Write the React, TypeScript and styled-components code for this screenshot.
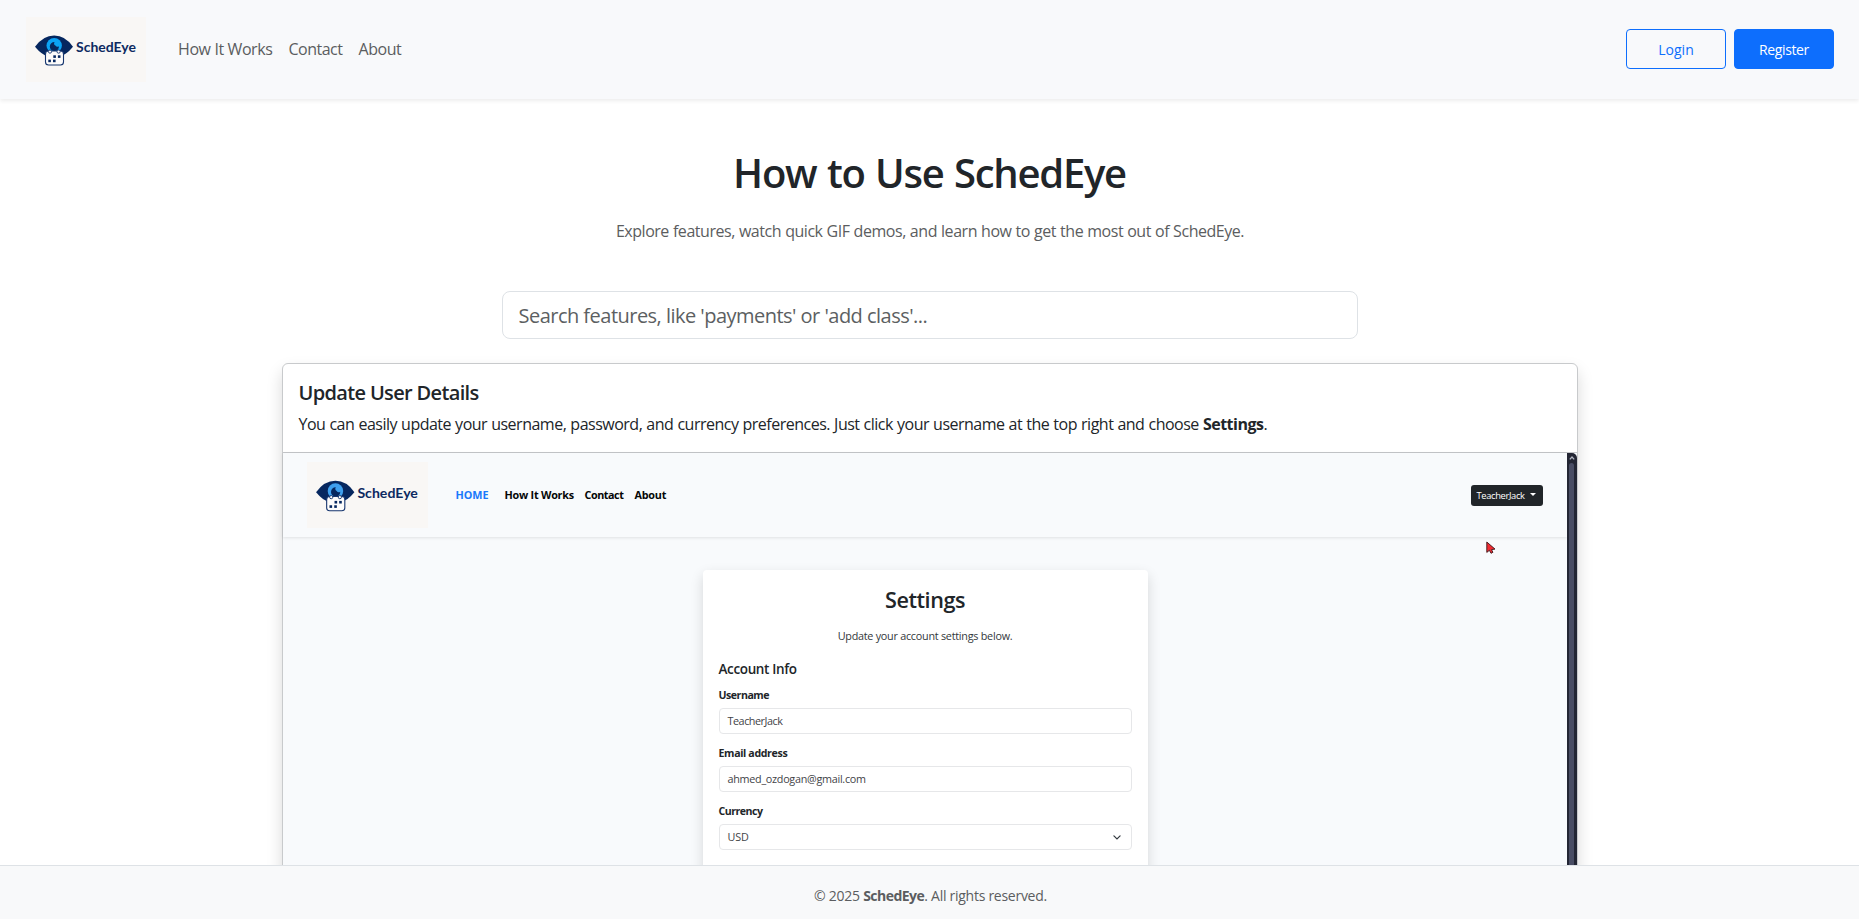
import React from 'react';
import styled, { createGlobalStyle, css } from 'styled-components';

const GlobalStyle = createGlobalStyle`
  *, *::before, *::after { box-sizing: border-box; }
  body {
    margin: 0;
    background: #fff;
    color: #212529;
    font-family: "Open Sans", "Noto Sans", sans-serif;
    font-size: 16px;
    line-height: 24px;
  }
`;

const Page = styled.div`
  display: flex;
  flex-direction: column;
  height: 100vh;
  overflow: hidden;
`;

const Header = styled.header`
  position: relative;
  z-index: 1;
  flex: none;
  display: flex;
  align-items: center;
  height: 99px;
  padding: 0 25px 1px 26px;
  background: #f8f9fb;
  box-shadow: 0 2px 4px rgba(0, 0, 0, 0.075);
`;

const LogoImage = styled.svg<{ $width: number; $height: number }>`
  flex: none;
  display: block;
  width: ${(p) => p.$width}px;
  height: ${(p) => p.$height}px;
`;

const Nav = styled.nav`
  display: flex;
  gap: 16px;
  margin-left: 32px;
  flex: 1;
`;

const NavLink = styled.a<{ $tracking: number }>`
  color: #5b5d60;
  letter-spacing: ${(p) => p.$tracking}px;
`;

const Actions = styled.div`
  display: flex;
  gap: 8px;
`;

const Button = styled.button<{ $primary?: boolean }>`
  width: 100px;
  height: 40px;
  padding: 1px 0 0;
  border: 1px solid #0d6efd;
  border-radius: 4px;
  font: 400 14px/21px "Open Sans", sans-serif;
  ${(p) =>
    p.$primary
      ? css`
          background: #0d6efd;
          color: #fff;
          letter-spacing: -0.38px;
        `
      : css`
          background: transparent;
          color: #0d6efd;
        `}
`;

const Main = styled.main`
  flex: 1;
  min-height: 0;
  overflow: hidden;
  display: flex;
  flex-direction: column;
  align-items: center;
  padding-top: 50px;
`;

const Title = styled.h1`
  flex: none;
  margin: 0;
  font-size: 40px;
  line-height: 48px;
  font-weight: 600;
  letter-spacing: -1.27px;
  word-spacing: 1.4px;
`;

const Lead = styled.p`
  flex: none;
  margin: 22px 0 0;
  padding-left: 1px;
  color: #5b5d60;
  letter-spacing: -0.46px;
  word-spacing: 0.35px;
`;

const Search = styled.input`
  flex: none;
  width: 856px;
  height: 48px;
  margin: 48px 0 24px;
  padding: 8px 16px;
  border: 1px solid #dee2e6;
  border-radius: 8px;
  outline: none;
  font: 400 20px/30px "Open Sans", sans-serif;
  letter-spacing: -0.522px;
  &::placeholder {
    color: #5c5f62;
    opacity: 1;
  }
`;

const FeatureCard = styled.article`
  flex: none;
  width: 1296px;
  height: 900px;
  border: 1px solid #c8cacc;
  border-radius: 6px;
  background: #fff;
  box-shadow: 0 8px 16px rgba(0, 0, 0, 0.15);
`;

const FeatureIntro = styled.div`
  padding: 17px 16px 16px;
  border-bottom: 1px solid #c4c6c9;
`;

const FeatureTitle = styled.h5`
  margin: 0 0 7px;
  font-size: 20px;
  line-height: 24px;
  font-weight: 600;
  letter-spacing: -0.654px;
`;

const FeatureText = styled.p`
  margin: 0;
  letter-spacing: -0.5px;
  word-spacing: 0.42px;
`;

const Strong = styled.strong`
  font-weight: 700;
`;

const Demo = styled.div`
  position: relative;
  display: flex;
  height: 800px;
  background: #f8fafc;
`;

const DemoPage = styled.div`
  flex: 1;
  display: flex;
  flex-direction: column;
  align-items: center;
`;

const DemoHeader = styled.div`
  align-self: stretch;
  display: flex;
  align-items: center;
  height: 84px;
  padding: 0 24px;
  box-shadow: 0 1px 3px rgba(0, 0, 0, 0.1);
`;

const DemoNav = styled.div`
  flex: 1;
  display: flex;
  margin: 0 0 2px 28px;
  font-size: 10.8px;
  line-height: 17px;
  font-weight: 700;
  color: #050607;
`;

const DemoLink = styled.span<{ $width: number; $tracking: number; $active?: boolean }>`
  width: ${(p) => p.$width}px;
  white-space: nowrap;
  letter-spacing: ${(p) => p.$tracking}px;
  ${(p) => p.$active && 'color: #1a78fb;'}
`;

const UserMenu = styled.div`
  display: flex;
  align-items: center;
  gap: 5px;
  width: 72px;
  height: 21px;
  padding: 1px 0 0 6px;
  border-radius: 3px;
  background: #212529;
  color: #fff;
  font-size: 9.4px;
  line-height: 14px;
  letter-spacing: -0.36px;
`;

const Caret = styled.svg`
  width: 6px;
  height: 3px;
  margin-bottom: 2px;
`;

const Scrollbar = styled.div`
  display: flex;
  flex-direction: column;
  align-items: center;
  width: 10px;
  border-top-right-radius: 5px;
  background: #232634;
`;

const Thumb = styled.div`
  width: 5px;
  flex: 1;
  border-radius: 3px;
  background: #494d64;
`;

const ArrowUp = styled.svg`
  width: 10px;
  height: 10px;
`;

const Pointer = styled.svg`
  position: absolute;
  left: 1203px;
  top: 88px;
  width: 10px;
  height: 14px;
`;

const SettingsCard = styled.section`
  display: flex;
  flex-direction: column;
  width: 445px;
  height: 600px;
  margin: 33px 0 0 1px;
  padding: 17px 16px 16px;
  border-radius: 4px;
  background: #fff;
  box-shadow: 0 5px 13px rgba(0, 0, 0, 0.14);
`;

const SettingsTitle = styled.h2`
  margin: 0;
  text-align: center;
  font-size: 21.6px;
  line-height: 26px;
  font-weight: 600;
  letter-spacing: -0.46px;
`;

const SettingsHint = styled.p`
  margin: 15px 0 17px;
  text-align: center;
  font-size: 10.8px;
  line-height: 16px;
  letter-spacing: -0.25px;
  color: #33373b;
`;

const SectionTitle = styled.h4`
  margin: 0 0 10px;
  font-size: 13.5px;
  line-height: 16px;
  font-weight: 600;
  letter-spacing: -0.36px;
`;

const Field = styled.div`
  margin-bottom: 11px;
`;

const Label = styled.div<{ $tracking: number }>`
  margin-bottom: 5px;
  font-size: 10.6px;
  line-height: 16px;
  font-weight: 700;
  letter-spacing: ${(p) => p.$tracking}px;
`;

const Control = styled.div<{ $tracking: number }>`
  display: flex;
  align-items: center;
  justify-content: space-between;
  height: 26px;
  padding: 0 10px 0 8px;
  border: 1px solid #e6e7e9;
  border-radius: 4px;
  font-size: 10.8px;
  line-height: 16px;
  color: #3f4347;
  letter-spacing: ${(p) => p.$tracking}px;
`;

const Chevron = styled.svg`
  width: 8px;
  height: 5px;
`;

const Footer = styled.footer`
  position: relative;
  flex: none;
  height: 54px;
  padding: 19px 0 0 2px;
  border-top: 1px solid #dee2e6;
  background: #f8f9fa;
  color: #5b5d60;
  text-align: center;
  font-size: 14px;
  line-height: 21px;
  letter-spacing: -0.27px;
`;

const Brand = styled.strong`
  font-weight: 700;
  letter-spacing: -0.52px;
`;

interface LogoProps {
  width: number;
  height: number;
  iris: string;
}

function Logo({ width, height, iris }: LogoProps) {
  return (
    <LogoImage $width={width} $height={height} viewBox="0 0 120 65" preserveAspectRatio="none">
      <rect width="120" height="65" fill="#f9f7f5" />
      <path d="M9 29.7Q17 18.4 28.2 18.4T47 29.7Q40 38.2 34 39H22Q16 38.2 9 29.7Z" fill="#06275f" />
      <circle cx="28.2" cy="28.6" r="7.7" fill={iris} />
      <path d="M28.6 24.9a4.6 4.6 0 1 0 4.4 4.4a2.7 2.7 0 0 1-3.6-.7a2.7 2.7 0 0 1-.8-3.7Z" fill="#06275f" />
      <rect x="19.5" y="34" width="18" height="14" rx="3" fill="#fdfcfb" stroke="#17366f" strokeWidth="1.1" />
      <g fill="#fdfcfb" stroke="#17366f" strokeWidth=".9">
        <circle cx="24" cy="34.6" r="1.6" />
        <circle cx="32.6" cy="34.6" r="1.6" />
      </g>
      <g fill="#06275f">
        <rect x="27.3" y="38.3" width="2.6" height="2.6" />
        <rect x="31.9" y="38.3" width="2.6" height="2.6" />
        <rect x="22.3" y="42.6" width="2.6" height="2.6" />
        <rect x="27" y="42.6" width="2.6" height="2.6" />
      </g>
      <text
        x="50"
        y="35.2"
        textLength="60"
        lengthAdjust="spacingAndGlyphs"
        fill="#0d2a61"
        fontFamily="Lato, sans-serif"
        fontWeight="700"
        fontSize="13"
      >
        SchedEye
      </text>
    </LogoImage>
  );
}

export default function App() {
  return (
    <Page>
      <GlobalStyle />
      <Header>
        <Logo width={120} height={65} iris="#0ba3f5" />
        <Nav>
          <NavLink $tracking={-0.4}>How It Works</NavLink>
          <NavLink $tracking={-0.5}>Contact</NavLink>
          <NavLink $tracking={-0.45}>About</NavLink>
        </Nav>
        <Actions>
          <Button>Login</Button>
          <Button $primary>Register</Button>
        </Actions>
      </Header>
      <Main>
        <Title>How to Use SchedEye</Title>
        <Lead>Explore features, watch quick GIF demos, and learn how to get the most out of SchedEye.</Lead>
        <Search placeholder="Search features, like 'payments' or 'add class'..." />
        <FeatureCard>
          <FeatureIntro>
            <FeatureTitle>Update User Details</FeatureTitle>
            <FeatureText>
              You can easily update your username, password, and currency preferences. Just click your username at the
              top right and choose <Strong>Settings</Strong>.
            </FeatureText>
          </FeatureIntro>
          <Demo>
            <DemoPage>
              <DemoHeader>
                <Logo width={121} height={66} iris="#3fa0ee" />
                <DemoNav>
                  <DemoLink $width={49} $tracking={0} $active>HOME</DemoLink>
                  <DemoLink $width={80} $tracking={-0.23}>How It Works</DemoLink>
                  <DemoLink $width={50} $tracking={-0.45}>Contact</DemoLink>
                  <DemoLink $width={40} $tracking={-0.21}>About</DemoLink>
                </DemoNav>
                <UserMenu>
                  TeacherJack
                  <Caret viewBox="0 0 6 3" fill="#fff">
                    <path d="M0 0h6L3 3Z" />
                  </Caret>
                </UserMenu>
              </DemoHeader>
              <SettingsCard>
                <SettingsTitle>Settings</SettingsTitle>
                <SettingsHint>Update your account settings below.</SettingsHint>
                <SectionTitle>Account Info</SectionTitle>
                <Field>
                  <Label $tracking={-0.48}>Username</Label>
                  <Control $tracking={-0.46}>TeacherJack</Control>
                </Field>
                <Field>
                  <Label $tracking={-0.35}>Email address</Label>
                  <Control $tracking={-0.28}>ahmed_ozdogan@gmail.com</Control>
                </Field>
                <Field>
                  <Label $tracking={-0.5}>Currency</Label>
                  <Control $tracking={-0.2}>
                    USD
                    <Chevron viewBox="0 0 8 5" fill="none" stroke="#343a40" strokeWidth="1.2" strokeLinecap="round">
                      <path d="M.9.9 4 4 7.1.9" />
                    </Chevron>
                  </Control>
                </Field>
              </SettingsCard>
            </DemoPage>
            <Scrollbar>
              <ArrowUp viewBox="0 0 10 10" fill="none" stroke="#b5b8c4" strokeWidth="1.3">
                <path d="M2.8 6.4 5 4l2.2 2.4" />
              </ArrowUp>
              <Thumb />
            </Scrollbar>
            <Pointer viewBox="0 0 10 14">
              <path d="M.8 1v10.4l2.6-2.1 1.6 3 1.9-1-1.4-2.7 3.5-.5Z" fill="#f02b32" stroke="#3a1518" strokeWidth=".9" />
            </Pointer>
          </Demo>
        </FeatureCard>
      </Main>
      <Footer>
        © 2025 <Brand>SchedEye</Brand>. All rights reserved.
      </Footer>
    </Page>
  );
}
